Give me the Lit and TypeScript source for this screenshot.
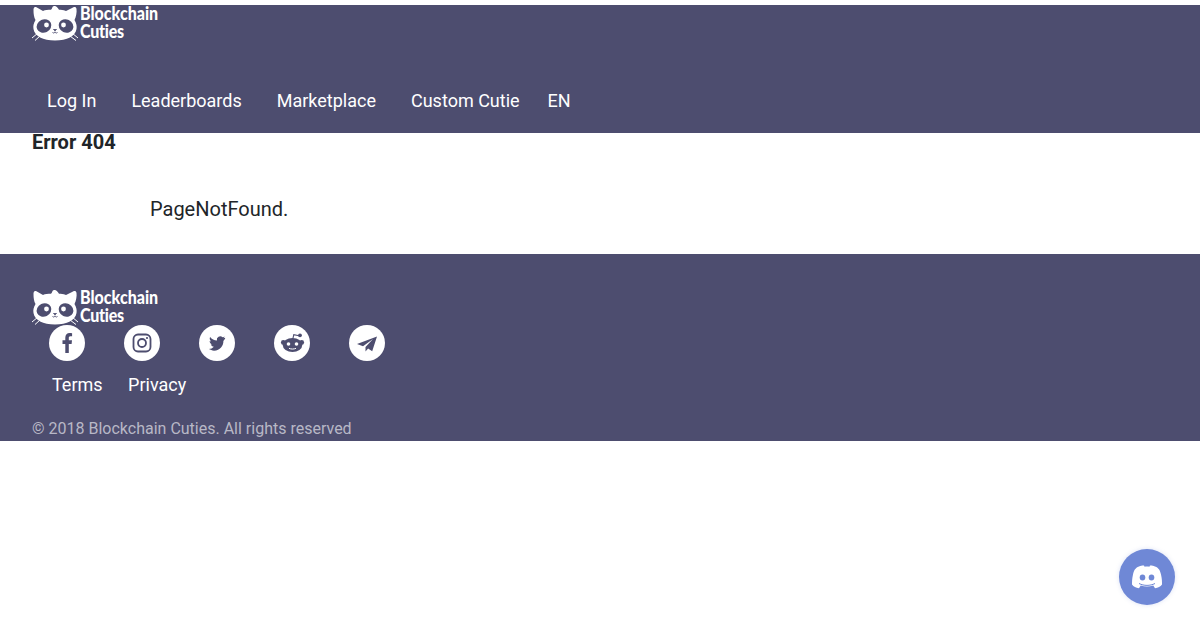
import { LitElement, html, css, svg } from "lit";
import { customElement } from "lit/decorators.js";

const logo = html`<div class="logo">
  <svg class="cat" viewBox="0 0 46 36" width="46" height="36">
    <path fill="#fff" d="M4 2 C2 1.500 1.500 3 1.500 5 C1.500 9 2 12.500 3.500 15 C1.500 18.500 1 21 1.500 24 C2.500 31 11 35.500 23 35.500 C35 35.500 43.500 31 44.500 24 C45 21 44.500 18.500 42.500 15 C44 12 45 7 44.500 4 C44 2 43 1.500 41 2.500 L34 6 C31 5 29 4.800 27 4.800 C26 3 24 .5 22 1 C20 1.500 20.500 3.500 19 4.800 C16 4.800 13 5 11 6 Z"/>
    <ellipse cx="12" cy="21" rx="7.500" ry="6.500" fill="#4d4d6f" transform="rotate(-25 12 21)"/>
    <ellipse cx="34" cy="21" rx="7.500" ry="6.500" fill="#4d4d6f" transform="rotate(25 34 21)"/>
    <circle cx="14.500" cy="20" r="2.400" fill="#fff"/><circle cx="31.500" cy="20" r="2.400" fill="#fff"/>
    <path d="M21.500 24.500h3l-1.500 1.400zM20.500 27.500c1.200.9 2 .6 2.500-.7c.5 1.300 1.300 1.600 2.500.7" fill="none" stroke="#4d4d6f" stroke-width=".9"/>
    <path d="M0 33 L6 28 M3 35.500 L8 31 M46 33 L40 28 M44 35.500 L38 31" stroke="#fff" stroke-width="1"/>
  </svg>
  <div class="word"><span>Blockchain</span><span class="c">Cuties</span></div>
</div>`;

const icons = [
  svg`<path fill="#4d4d6f" d="M19.800 28V19h2.800l.4-3.700h-3.200V13c0-1 .3-1.700 1.600-1.700h1.700V8.200c-.4 0-1.300-.2-2.500-.2-2.600 0-4.300 1.700-4.300 4.800v2.500h-2.800V19h2.800v9z"/>`,
  svg`<rect x="9.500" y="9.500" width="17" height="17" rx="4.500" fill="none" stroke="#4d4d6f" stroke-width="1.800"/><circle cx="18" cy="18" r="4" fill="none" stroke="#4d4d6f" stroke-width="1.800"/><circle cx="23" cy="13" r="1.100" fill="#4d4d6f"/>`,
  svg`<g transform="translate(18 18) scale(.9) translate(-18 -18)"><path fill="#4d4d6f" d="M27 12.200c-.7.300-1.400.5-2.100.6.800-.5 1.300-1.200 1.600-2-.7.400-1.500.7-2.300.9a3.700 3.700 0 0 0-6.300 3.400c-3-.2-5.700-1.600-7.500-3.900-.3.600-.5 1.200-.5 1.900 0 1.300.6 2.400 1.600 3.100-.6 0-1.200-.2-1.700-.5 0 1.800 1.300 3.300 3 3.700-.5.100-1.100.2-1.700.1.500 1.500 1.800 2.500 3.400 2.600A7.500 7.500 0 0 1 9 24.800c1.700 1 3.600 1.700 5.700 1.700 6.800 0 10.600-5.700 10.400-10.800.7-.9 1.400-1.600 1.900-2.500z"/></g>`,
  svg`<circle cx="9.300" cy="17.500" r="2.400" fill="#4d4d6f"/><circle cx="27.700" cy="17.500" r="2.400" fill="#4d4d6f"/><ellipse cx="18.500" cy="20" rx="9.800" ry="7" fill="#4d4d6f"/><path d="M18.800 14l1-4.300 5.300 1" fill="none" stroke="#4d4d6f" stroke-width="1.100"/><circle cx="26" cy="10.300" r="1.900" fill="#4d4d6f"/><circle cx="14.500" cy="19" r="1.800" fill="#fff"/><circle cx="22.500" cy="19" r="1.800" fill="#fff"/><path d="M15 23.300c2 1 5 1 7 0" fill="none" stroke="#fff" stroke-width="1"/>`,
  svg`<path fill="#4d4d6f" d="M28 11.500 8 19l6 2.200L24 14l-7.500 8v4.500l2.600-3 4.100 2.800z"/>`,
];

@customElement("app-root")
export class AppRoot extends LitElement {
  static styles = css`
    :host { display: block; font-family: Roboto, "Liberation Sans", sans-serif; color: #212529; padding-top: 5px; }
    .bar { background: #4d4d6f; }
    .top { height: 128px; box-sizing: border-box; padding-left: 32px; display: flex; flex-direction: column; }
    .logo { display: flex; align-items: flex-start; height: 36px; width: 126px; color: #fff; }
    .cat { display: block; flex: none; }
    .word { display: flex; flex-direction: column; margin-left: 2px; margin-top: -1px; font: 900 18px/18px Lato, sans-serif; transform-origin: left top; transform: scaleX(.89); white-space: nowrap; }
    .word .c { letter-spacing: -.3px; }
    nav { display: flex; gap: 5px; margin-top: 46px; font-size: 18px; line-height: 28px; color: #fff; }
    nav a { padding: 0 15px; }
    nav a.lang { padding: 0; margin-left: 8px; }
    .err { height: 121px; box-sizing: border-box; padding-left: 32px; }
    h1 { margin: 0; font-size: 20px; font-weight: 700; line-height: 18px; }
    p { margin: 0; padding: 46px 0 0 118px; font-size: 20px; line-height: 24px; }
    footer { height: 187px; box-sizing: border-box; padding: 35px 0 0 32px; color: #fff; }
    .social { display: flex; gap: 39px; padding-left: 17px; }
    .social span { display: block; width: 36px; height: 36px; border-radius: 50%; background: #fff; }
    .social svg { display: block; }
    .links { display: flex; gap: 25.5px; padding: 10px 0 0 20px; font-size: 18px; line-height: 28px; }
    .copy { padding-top: 18px; font-size: 16px; line-height: 24px; color: #b8b8c6; }
    .discord { position: fixed; left: 1119px; top: 549px; width: 56px; height: 56px; border-radius: 50%; background: #6f88d6; box-shadow: 0 0 4px rgba(111,136,214,.25); display: flex; align-items: center; justify-content: center; }
  `;
  render() {
    return html`
      <div class="bar top">
        ${logo}
        <nav><a>Log In</a><a>Leaderboards</a><a>Marketplace</a><a>Custom Cutie</a><a class="lang">EN</a></nav>
      </div>
      <div class="err">
        <h1>Error 404</h1>
        <p>PageNotFound.</p>
      </div>
      <footer class="bar">
        ${logo}
        <div class="social">
          ${icons.map((i) => html`<span><svg viewBox="0 0 36 36" width="36" height="36">${i}</svg></span>`)}
        </div>
        <div class="links"><a>Terms</a><a>Privacy</a></div>
        <div class="copy">© 2018 Blockchain Cuties. All rights reserved</div>
      </footer>
      <div class="discord">
        <svg viewBox="0 0 32 24" width="32" height="24">
          <path fill="#fff" d="M8 1.500C10 .5 12 .3 13 .5l.6 1.200c1.600-.2 3.200-.2 4.800 0L19 .5c1 -.2 3 0 5 1 4 1.500 5 4 6 8 1 4 1 7.500 1 10-1.500 2-4 3.500-7 3.800l-1.700-2.800c-4.500 1.300-8.100 1.300-12.600 0L8 23.300c-3-.3-5.500-1.800-7-3.800 0-2.500 0-6 1-10 1-4 2-6.500 6-8z"/>
          <ellipse cx="11.500" cy="12.500" rx="2.800" ry="3" fill="#6f88d6"/><ellipse cx="20.500" cy="12.500" rx="2.800" ry="3" fill="#6f88d6"/>
          <path d="M8 18.500c5 2.500 11 2.500 16 0" fill="none" stroke="#6f88d6" stroke-width="1"/>
        </svg>
      </div>
    `;
  }
}
